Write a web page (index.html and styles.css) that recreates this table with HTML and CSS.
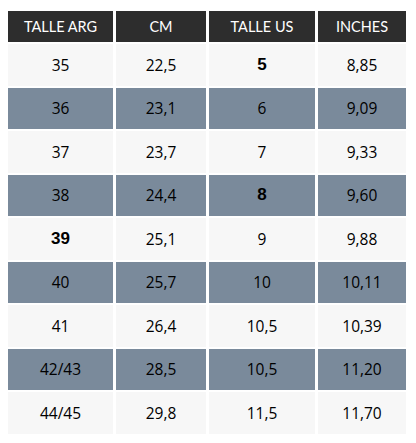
FILE: index.html
```html
<!DOCTYPE html>
<html>
<head>
<meta charset="utf-8">
<link rel="stylesheet" href="styles.css">
</head>
<body>
<div class="table">
  <div class="th">TALLE ARG</div><div class="th">CM</div><div class="th">TALLE US</div><div class="th">INCHES</div>
  <div class="td">35</div><div class="td">22,5</div><div class="td b">5</div><div class="td">8,85</div>
  <div class="td alt">36</div><div class="td alt">23,1</div><div class="td alt">6</div><div class="td alt">9,09</div>
  <div class="td">37</div><div class="td">23,7</div><div class="td">7</div><div class="td">9,33</div>
  <div class="td alt">38</div><div class="td alt">24,4</div><div class="td alt b">8</div><div class="td alt">9,60</div>
  <div class="td b">39</div><div class="td">25,1</div><div class="td">9</div><div class="td">9,88</div>
  <div class="td alt">40</div><div class="td alt">25,7</div><div class="td alt">10</div><div class="td alt">10,11</div>
  <div class="td">41</div><div class="td">26,4</div><div class="td">10,5</div><div class="td">10,39</div>
  <div class="td alt">42/43</div><div class="td alt">28,5</div><div class="td alt">10,5</div><div class="td alt">11,20</div>
  <div class="td">44/45</div><div class="td">29,8</div><div class="td">11,5</div><div class="td">11,70</div>
</div>
</body>
</html>
```
FILE: styles.css
```css
html, body {
  margin: 0;
  padding: 0;
  background: #ffffff;
}
body {
  padding: 11px 0 0 8px;
  font-family: "Open Sans", "Liberation Sans", sans-serif;
}
.table {
  display: grid;
  grid-template-columns: 105px 90px 106px 88px;
  grid-template-rows: 31px;
  grid-auto-rows: 41.5px;
  column-gap: 3px;
  row-gap: 2px;
}
.th {
  background: #2d2d2d;
  color: #ffffff;
  font-family: Lato, "Open Sans", sans-serif;
  font-size: 14.5px;
  display: flex;
  align-items: center;
  justify-content: center;
}
.td {
  background: #f7f7f7;
  color: #000000;
  font-size: 15.5px;
  display: flex;
  align-items: center;
  justify-content: center;
}
.td.alt {
  background: #7a8a9b;
}
.td.b {
  font-weight: 700;
  font-size: 17px;
  font-family: "Liberation Sans", Arial, sans-serif;
}
```
